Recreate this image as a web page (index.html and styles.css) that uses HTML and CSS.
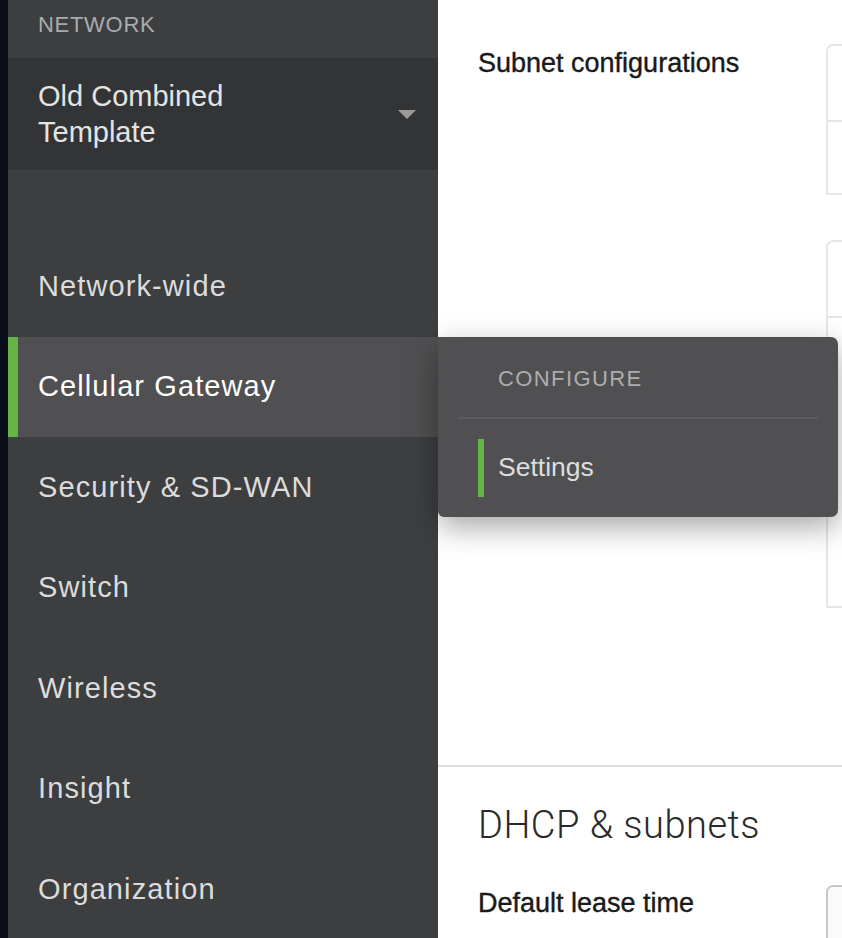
FILE: index.html
```html
<!DOCTYPE html>
<html>
<head>
<meta charset="utf-8">
<link rel="stylesheet" href="styles.css">
</head>
<body>
<div class="page">
  <div class="strip"></div>
  <aside class="sidebar">
    <div class="section-label">NETWORK</div>
    <div class="network-select">
      <div class="network-name">Old Combined<br>Template</div>
      <svg class="caret" width="18" height="10" viewBox="0 0 18 10"><polygon points="0,0 18,0 9,9" fill="#9b9b9b"/></svg>
    </div>
    <nav class="nav">
      <div class="nav-item">Network-wide</div>
      <div class="nav-item active">Cellular Gateway
        <div class="flyout">
          <div class="flyout-head">CONFIGURE</div>
          <div class="flyout-sep"></div>
          <div class="flyout-item">Settings</div>
        </div>
      </div>
      <div class="nav-item">Security &amp; SD-WAN</div>
      <div class="nav-item">Switch</div>
      <div class="nav-item">Wireless</div>
      <div class="nav-item">Insight</div>
      <div class="nav-item">Organization</div>
    </nav>
  </aside>
  <main class="main">
    <div class="row row-subnet">
      <div class="label label-subnet">Subnet configurations</div>
      <div class="boxes">
        <div class="box box1"><div class="box-top"></div></div>
        <div class="box box2"><div class="box-top"></div></div>
      </div>
    </div>
    <div class="divider"></div>
    <h2 class="heading">DHCP &amp; subnets</h2>
    <div class="row row-lease">
      <div class="label label-lease">Default lease time</div>
      <div class="boxes">
        <div class="box box3"></div>
      </div>
    </div>
  </main>
</div>
</body>
</html>
```

FILE: styles.css
```css
html, body {
  margin: 0;
  padding: 0;
  height: 100%;
  overflow: hidden;
  background: #ffffff;
}

.page {
  display: flex;
  height: 938px;
  font-family: "Liberation Sans", Arial, sans-serif;
}

.strip {
  width: 8px;
  flex: none;
  background: #0b0f1a;
}

.sidebar {
  width: 430px;
  flex: none;
  background: #3d3e40;
  position: relative;
  z-index: 2;
}

.section-label {
  height: 58px;
  box-sizing: border-box;
  padding: 12px 0 0 30px;
  font-size: 22px;
  line-height: 26px;
  letter-spacing: 0.7px;
  color: #a9abae;
}

.network-select {
  height: 112px;
  box-sizing: border-box;
  background: #333436;
  display: flex;
  align-items: center;
  justify-content: space-between;
  padding: 0 22px 0 30px;
}

.network-name {
  font-size: 29px;
  line-height: 36px;
  color: #e4e4e4;
}

.caret {
  margin-top: 2px;
}

.nav {
  padding-top: 66px;
}

.nav-item {
  height: 100.5px;
  box-sizing: border-box;
  display: flex;
  align-items: center;
  padding-left: 30px;
  font-size: 29px;
  letter-spacing: 1.1px;
  color: #dcdcdc;
  position: relative;
}

.nav-item.active {
  background: #505052;
  border-left: 10px solid #67b346;
  padding-left: 20px;
  color: #ffffff;
}

.flyout {
  position: absolute;
  left: 100%;
  top: 0;
  width: 400px;
  height: 180px;
  background: #505052;
  border-radius: 0 7px 7px 6px;
  box-shadow: 0 10px 30px rgba(0, 0, 0, 0.35);
  letter-spacing: 0;
}

.flyout-head {
  padding: 29px 0 0 60px;
  height: 51px;
  box-sizing: border-box;
  font-size: 22px;
  line-height: 26px;
  letter-spacing: 1.4px;
  color: #adadad;
}

.flyout-sep {
  margin: 29px 20px 0 20px;
  height: 2px;
  background: #5c5c5e;
}

.flyout-item {
  margin: 20px 0 0 40px;
  height: 58px;
  border-left: 6px solid #67b346;
  padding-left: 14px;
  display: flex;
  align-items: center;
  font-size: 26.5px;
  color: #dddddd;
}

.main {
  flex: 1;
  min-width: 0;
  overflow: hidden;
  background: #ffffff;
  padding-top: 44px;
  box-sizing: border-box;
}

.row {
  display: flex;
  padding-left: 40px;
}

.label {
  width: 348px;
  flex: none;
  font-family: "Liberation Sans", Arial, sans-serif;
  font-size: 27px;
  line-height: 30px;
  color: #1a1a1a;
  -webkit-text-stroke: 0.4px #1a1a1a;
}

.label-subnet {
  margin-top: 4px;
}

.boxes {
  display: flex;
  flex-direction: column;
  gap: 45px;
}

.box {
  width: 200px;
  box-sizing: border-box;
  border: 2px solid #e6e6e6;
  border-right: none;
  border-radius: 7px 0 0 0;
  background: #ffffff;
}

.box1 {
  height: 151px;
}

.box2 {
  height: 368px;
}

.box-top {
  height: 74px;
  border-bottom: 2px solid #e6e6e6;
}

.divider {
  margin-top: 157px;
  height: 2px;
  background: #dddddd;
}

.heading {
  margin: 36px 0 0 40px;
  font-family: Roboto, "Liberation Sans", sans-serif;
  font-weight: 300;
  font-size: 38px;
  line-height: 44px;
  letter-spacing: 0.5px;
  color: #2a2a2a;
}

.row-lease {
  margin-top: 38px;
}

.label-lease {
  margin-top: 3px;
}

.box3 {
  height: 80px;
  border-color: #c8c8c8;
  background: #fafafa;
}
```
